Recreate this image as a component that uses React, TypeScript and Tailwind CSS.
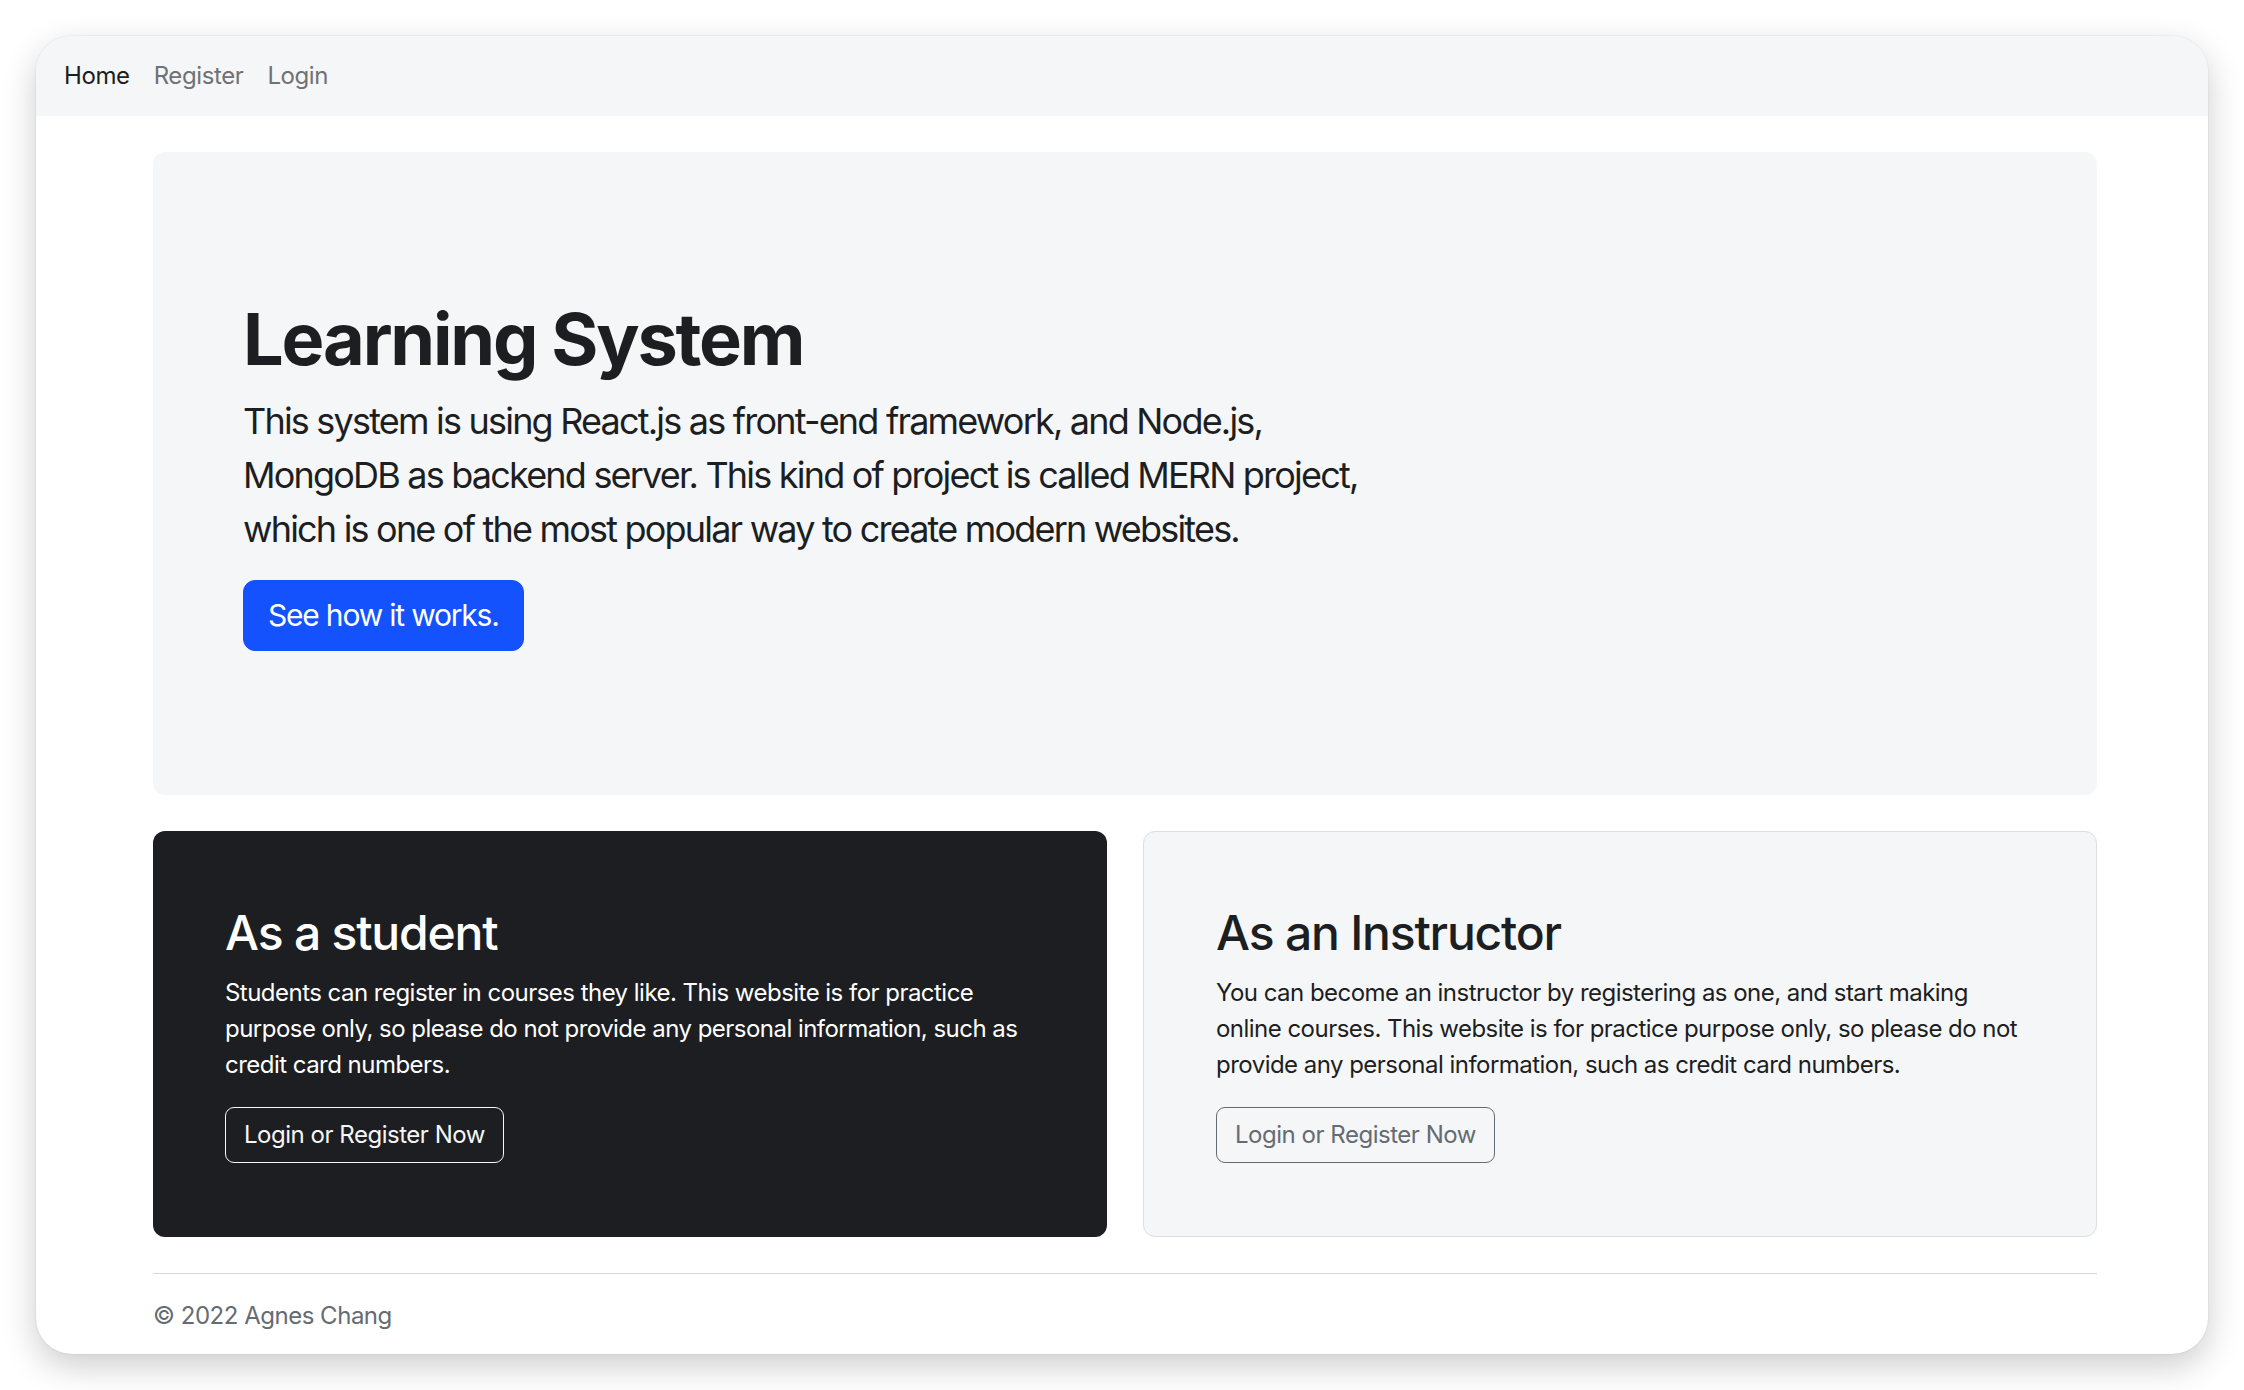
import React from 'react';

const font = { fontFamily: 'Inter, "Noto Sans", sans-serif' };

export default function App() {
  return (
    <div className="min-h-[1390px] w-full bg-white p-[36px]" style={font}>
      <div className="h-[1318px] w-[2172px] overflow-hidden rounded-[36px] bg-white text-[#1c1e21] shadow-[0_12px_34px_rgba(0,0,0,0.2),0_0_2px_rgba(0,0,0,0.12)]">
        <nav className="flex h-[80px] items-center bg-[#f5f6f8] px-[16px] tracking-[-0.025em]">
          <a className="px-[12px] text-[24px] text-[#1c1e21]">Home</a>
          <a className="px-[12px] text-[24px] text-[#6f7174]">Register</a>
          <a className="px-[12px] text-[24px] text-[#6f7174]">Login</a>
        </nav>

        <main className="ml-[117px] w-[1944px] py-[36px]">
          <section className="mb-[36px] rounded-[12px] bg-[#f5f6f8] p-[72px]">
            <div className="px-[18px] py-[72px]">
              <h1 className="mb-[12px] text-[72px] font-bold leading-[1.2] tracking-[-0.03em]">Learning System</h1>
              <p className="mb-[24px] w-[1176px] text-[36px] leading-[1.5] tracking-[-0.05em]">
                This system is using React.js as front-end framework, and Node.js, MongoDB as backend server. This kind of project is called MERN project, which is one of the most popular way to create modern websites.
              </p>
              <button className="rounded-[12px] border border-[#1352fd] bg-[#1352fd] px-[24px] py-[12px] text-[30px] leading-[1.5] tracking-[-0.04em] text-white">
                See how it works.
              </button>
            </div>
          </section>

          <div className="grid grid-cols-2 gap-[36px]">
            <div className="rounded-[12px] bg-[#1c1e21] px-[72px] pb-[74px] pt-[73px] text-white">
              <h2 className="mb-[13px] text-[48px] font-medium leading-[1.2] tracking-[-0.025em]">As a student</h2>
              <p className="mb-[24px] text-[24px] leading-[1.5] tracking-[-0.022em]">
                Students can register in courses they like. This website is for practice purpose only, so please do not provide any personal information, such as credit card numbers.
              </p>
              <button className="rounded-[9px] border border-[#f5f6f8] px-[18px] py-[9px] text-[24px] leading-[1.5] tracking-[-0.02em] text-[#f5f6f8]">
                Login or Register Now
              </button>
            </div>
            <div className="rounded-[12px] border border-[#dcdee2] bg-[#f5f6f8] px-[72px] pb-[73px] pt-[72px]">
              <h2 className="mb-[13px] text-[48px] font-medium leading-[1.2] tracking-[-0.025em]">As an Instructor</h2>
              <p className="mb-[24px] text-[24px] leading-[1.5] tracking-[-0.022em]">
                You can become an instructor by registering as one, and start making online courses. This website is for practice purpose only, so please do not provide any personal information, such as credit card numbers.
              </p>
              <button className="rounded-[9px] border border-[#656b73] px-[18px] py-[9px] text-[24px] leading-[1.5] tracking-[-0.02em] text-[#656b73]">
                Login or Register Now
              </button>
            </div>
          </div>

          <footer className="mt-[36px] border-t border-[#d3d6db] pt-[24px] text-[24px] leading-[1.5] tracking-[-0.02em] text-[#656b73]">
            © 2022 Agnes Chang
          </footer>
        </main>
      </div>
    </div>
  );
}
